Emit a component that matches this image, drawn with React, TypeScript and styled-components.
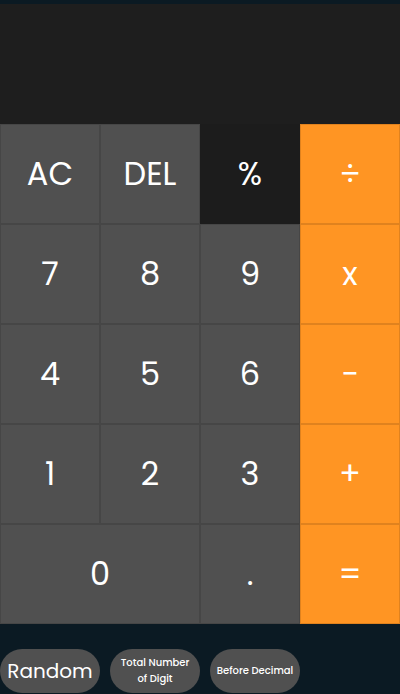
import React from "react";
import styled, { createGlobalStyle, css } from "styled-components";

const Global = createGlobalStyle`
  html, body {
    margin: 0;
    padding: 0;
    background: #0b1a23;
  }
  body {
    font-family: "Poppins", "Inter", "Noto Sans", sans-serif;
  }
`;

const Page = styled.div`
  padding-top: 4px;
  width: 400px;
  min-height: 690px;
  background: #0b1a23;
`;

const Display = styled.div`
  height: 120px;
  background: #1e1e1e;
`;

const Keypad = styled.div`
  display: grid;
  grid-template-columns: repeat(4, 100px);
  grid-auto-rows: 100px;
`;

type Variant = "gray" | "dark" | "orange";

const Key = styled.button<{ $variant: Variant; $wide?: boolean }>`
  box-sizing: border-box;
  margin: 0;
  padding: 0;
  display: flex;
  align-items: center;
  justify-content: center;
  border: 1px solid rgba(0, 0, 0, 0.12);
  color: #ffffff;
  font-family: "Poppins", "Inter", "Noto Sans", sans-serif;
  font-size: 32px;
  font-weight: 400;
  cursor: pointer;
  ${(p) =>
    p.$variant === "gray" &&
    css`
      background: #505050;
    `}
  ${(p) =>
    p.$variant === "dark" &&
    css`
      background: #1c1c1c;
      border-color: #1c1c1c;
    `}
  ${(p) =>
    p.$variant === "orange" &&
    css`
      background: #ff9523;
    `}
  ${(p) =>
    p.$wide &&
    css`
      grid-column: span 2;
    `}
`;

const Controls = styled.div`
  display: flex;
  gap: 10px;
  margin-top: 25px;
`;

const Pill = styled.button<{ $width: number; $large?: boolean }>`
  box-sizing: border-box;
  width: ${(p) => p.$width}px;
  height: 44px;
  border: none;
  border-radius: 22px;
  background: #505050;
  color: #ffffff;
  padding: 0 ${(p) => (p.$large ? "4px" : "6px")};
  font-family: "Poppins", "Inter", "Noto Sans", sans-serif;
  font-size: ${(p) => (p.$large ? "20px" : "10px")};
  font-weight: ${(p) => (p.$large ? 400 : 500)};
  line-height: ${(p) => (p.$large ? "44px" : "16px")};
  text-align: center;
  cursor: pointer;
`;

const keys: { label: string; variant: Variant; wide?: boolean }[] = [
  { label: "AC", variant: "gray" },
  { label: "DEL", variant: "gray" },
  { label: "%", variant: "dark" },
  { label: "÷", variant: "orange" },
  { label: "7", variant: "gray" },
  { label: "8", variant: "gray" },
  { label: "9", variant: "gray" },
  { label: "x", variant: "orange" },
  { label: "4", variant: "gray" },
  { label: "5", variant: "gray" },
  { label: "6", variant: "gray" },
  { label: "−", variant: "orange" },
  { label: "1", variant: "gray" },
  { label: "2", variant: "gray" },
  { label: "3", variant: "gray" },
  { label: "+", variant: "orange" },
  { label: "0", variant: "gray", wide: true },
  { label: ".", variant: "gray" },
  { label: "=", variant: "orange" },
];

export default function App() {
  return (
    <Page>
      <Global />
      <Display />
      <Keypad>
        {keys.map((k) => (
          <Key key={k.label} $variant={k.variant} $wide={k.wide}>
            {k.label}
          </Key>
        ))}
      </Keypad>
      <Controls>
        <Pill $width={100} $large>
          Random
        </Pill>
        <Pill $width={90}>Total Number of Digit</Pill>
        <Pill $width={90}>Before Decimal</Pill>
      </Controls>
    </Page>
  );
}
